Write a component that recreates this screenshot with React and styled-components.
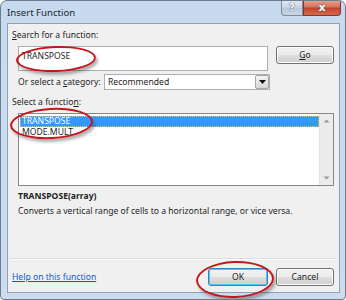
import React from 'react'
import styled, { createGlobalStyle } from 'styled-components'

const GlobalStyle = createGlobalStyle`
  html, body {
    margin: 0;
    padding: 0;
    background: #ffffff;
  }
  body {
    font-family: "Noto Sans", "Liberation Sans", sans-serif;
    font-size: 8.6px;
    color: #1e1e1e;
  }
`

// the outer Win7 style frame
const Window = styled.div`
  position: relative;
  width: 346px;
  height: 300px;
  box-sizing: border-box;
  border: 1px solid #6d7c8e;
  border-radius: 7px 7px 4px 4px;
  background: linear-gradient(180deg, #c6d9ee 0%, #c9dcef 12%, #cadcee 100%);
  display: flex;
  flex-direction: column;
  overflow: hidden;
`

const TitleBar = styled.div`
  height: 22px;
  display: flex;
  align-items: flex-start;
  justify-content: space-between;
  padding: 0 4px 0 6px;
`

const Title = styled.div`
  font-size: 9.6px;
  color: #1c2634;
  padding-top: 5px;
`

const Caption = styled.div`
  display: flex;
  margin-top: -1px;
`

// help and close buttons in the title bar
const CaptionButton = styled.div`
  width: ${props => props.$width}px;
  height: 16px;
  box-sizing: border-box;
  border: 1px solid ${props => (props.$close ? '#7a3a32' : '#7d8a99')};
  border-top: none;
  border-radius: ${props => (props.$close ? '0 0 4px 0' : '0 0 0 4px')};
  background: ${props =>
    props.$close
      ? 'linear-gradient(180deg, #e8a596 0%, #d7735f 45%, #c4432d 55%, #d66a4f 100%)'
      : 'linear-gradient(180deg, #e2eaf3 0%, #ccd8e6 45%, #b8c7d9 55%, #c9d6e4 100%)'};
  color: #ffffff;
  display: flex;
  align-items: center;
  justify-content: center;
  font-family: "DejaVu Sans", sans-serif;
  font-weight: bold;
  font-size: ${props => (props.$close ? '11px' : '10px')};
  text-shadow: 0 0 1px #40505f, 0 0 1px #40505f;
`

const Client = styled.div`
  flex: 1;
  margin: 0 5px 6px 6px;
  border: 1px solid #8da1b7;
  background: #f0f0f0;
  display: flex;
  flex-direction: column;
  padding: 5px 5px 6px 4px;
`

const Label = styled.div`
  line-height: 12px;
  height: 12px;
  margin-top: ${props => props.$mt || 0}px;
  padding-left: ${props => props.$indent || 0}px;
  font-weight: ${props => (props.$bold ? 'bold' : 'normal')};
  white-space: nowrap;
`

const Row = styled.div`
  display: flex;
  align-items: ${props => props.$align || 'flex-start'};
  margin-top: ${props => props.$mt || 0}px;
  padding-left: ${props => props.$indent || 0}px;
`

const TextBox = styled.div`
  width: 250px;
  height: 25px;
  box-sizing: border-box;
  border: 1px solid #abadb3;
  background: #ffffff;
  padding: 3px 0 0 3px;
  line-height: 12px;
`

const Button = styled.div`
  width: ${props => props.$width}px;
  height: 18px;
  box-sizing: border-box;
  margin-left: ${props => props.$ml || 0}px;
  border: 1px solid ${props => (props.$default ? '#3c7fb1' : '#707070')};
  border-radius: 3px;
  background: linear-gradient(180deg, #f2f2f2 0%, #ebebeb 48%, #dddddd 52%, #cfcfcf 100%);
  box-shadow: inset 0 0 0 1px ${props => (props.$default ? '#48c8f5' : '#fcfcfc')};
  display: flex;
  align-items: center;
  justify-content: center;
  line-height: 12px;
`

const CategoryLabel = styled.div`
  width: 86px;
  line-height: 12px;
  white-space: nowrap;
`

const Select = styled.div`
  width: 166px;
  height: 16px;
  box-sizing: border-box;
  border: 1px solid #abadb3;
  background: #ffffff;
  display: flex;
  align-items: center;
  justify-content: space-between;
  padding-left: 3px;
`

const DropButton = styled.div`
  width: 14px;
  height: 14px;
  box-sizing: border-box;
  border: 1px solid #a5a5a5;
  border-radius: 2px;
  background: linear-gradient(180deg, #f5f5f5 0%, #e6e6e6 50%, #d6d6d6 100%);
  display: flex;
  align-items: center;
  justify-content: center;
`

const ListBox = styled.div`
  width: 316px;
  height: 73px;
  box-sizing: border-box;
  border: 1px solid #828790;
  background: #ffffff;
  display: flex;
`

const ListItems = styled.div`
  flex: 1;
  padding: 2px 0 0 1px;
`

const ListItem = styled.div`
  height: 11px;
  line-height: 11px;
  padding-left: 2px;
  box-sizing: border-box;
  background: ${props => (props.$selected ? '#3399ff' : 'transparent')};
  color: ${props => (props.$selected ? '#ffffff' : '#1e1e1e')};
  outline: ${props => (props.$selected ? '1px dotted #f0c060' : 'none')};
  outline-offset: -1px;
`

const ScrollBar = styled.div`
  width: 13px;
  background: #ececec;
  border-left: 1px solid #e2e2e2;
  display: flex;
  flex-direction: column;
  justify-content: space-between;
  align-items: center;
  padding: 5px 0 5px;
`

const Spacer = styled.div`
  flex: 1;
`

const Separator = styled.div`
  height: 1px;
  margin: 0 -2px 0 -2px;
  background: #d7dfe6;
  border-bottom: 1px solid #fbfbfb;
`

const Footer = styled.div`
  display: flex;
  align-items: center;
  margin-top: 8px;
`

const HelpLink = styled.a`
  color: #0a5ccc;
  text-decoration: underline;
  flex: 1;
  line-height: 12px;
  cursor: pointer;
`

// red hand-drawn annotation circles over the dialog
const Ring = styled.div`
  position: absolute;
  left: ${props => props.$x}px;
  top: ${props => props.$y}px;
  width: ${props => props.$w}px;
  height: ${props => props.$h}px;
  box-sizing: border-box;
  border: 2px solid #c4161c;
  border-radius: 50%;
  box-shadow: 2px 3px 3px rgba(60, 60, 60, 0.4);
  transform: rotate(${props => props.$rot || 0}deg);
  pointer-events: none;
`

const Arrow = ({ up }) => (
  <svg width="7" height="4" viewBox="0 0 7 4">
    <path d={up ? 'M0.5 3.5 L3.5 0.5 L6.5 3.5 Z' : 'M0.5 0.5 L3.5 3.5 L6.5 0.5 Z'} fill="#9a9a9a" />
  </svg>
)

export default function App() {
  return (
    <>
      <GlobalStyle />
      <Window>
        <TitleBar>
          <Title>Insert Function</Title>
          <Caption>
            <CaptionButton $width={22}>?</CaptionButton>
            <CaptionButton $width={38} $close>x</CaptionButton>
          </Caption>
        </TitleBar>
        <Client>
          <Label>
            <u>S</u>earch for a function:
          </Label>
          <Row $mt={5} $indent={6}>
            <TextBox>TRANSPOSE</TextBox>
            <Button $width={58} $ml={8}>
              <span>
                <u>G</u>o
              </span>
            </Button>
          </Row>
          <Row $mt={3} $indent={6} $align="center">
            <CategoryLabel>
              Or select a <u>c</u>ategory:
            </CategoryLabel>
            <Select>
              <span>Recommended</span>
              <DropButton>
                <svg width="7" height="4" viewBox="0 0 7 4">
                  <path d="M0 0 L7 0 L3.5 4 Z" fill="#111111" />
                </svg>
              </DropButton>
            </Select>
          </Row>
          <Label $mt={6}>
            Select a functio<u>n</u>:
          </Label>
          <Row $mt={5} $indent={6}>
            <ListBox>
              <ListItems>
                <ListItem $selected>TRANSPOSE</ListItem>
                <ListItem>MODE.MULT</ListItem>
              </ListItems>
              <ScrollBar>
                <Arrow up />
                <Arrow />
              </ScrollBar>
            </ListBox>
          </Row>
          <Label $mt={4} $indent={6} $bold>
            TRANSPOSE(array)
          </Label>
          <Label $mt={3} $indent={6}>
            Converts a vertical range of cells to a horizontal range, or vice versa.
          </Label>
          <Spacer />
          <Separator />
          <Footer>
            <HelpLink>Help on this function</HelpLink>
            <Button $width={60} $default>
              OK
            </Button>
            <Button $width={58} $ml={8}>
              Cancel
            </Button>
          </Footer>
        </Client>
        <Ring $x={15} $y={45} $w={80} $h={26} $rot={-2} />
        <Ring $x={9} $y={107} $w={83} $h={31} $rot={-3} />
        <Ring $x={195} $y={260} $w={78} $h={37} $rot={-2} />
      </Window>
    </>
  )
}
